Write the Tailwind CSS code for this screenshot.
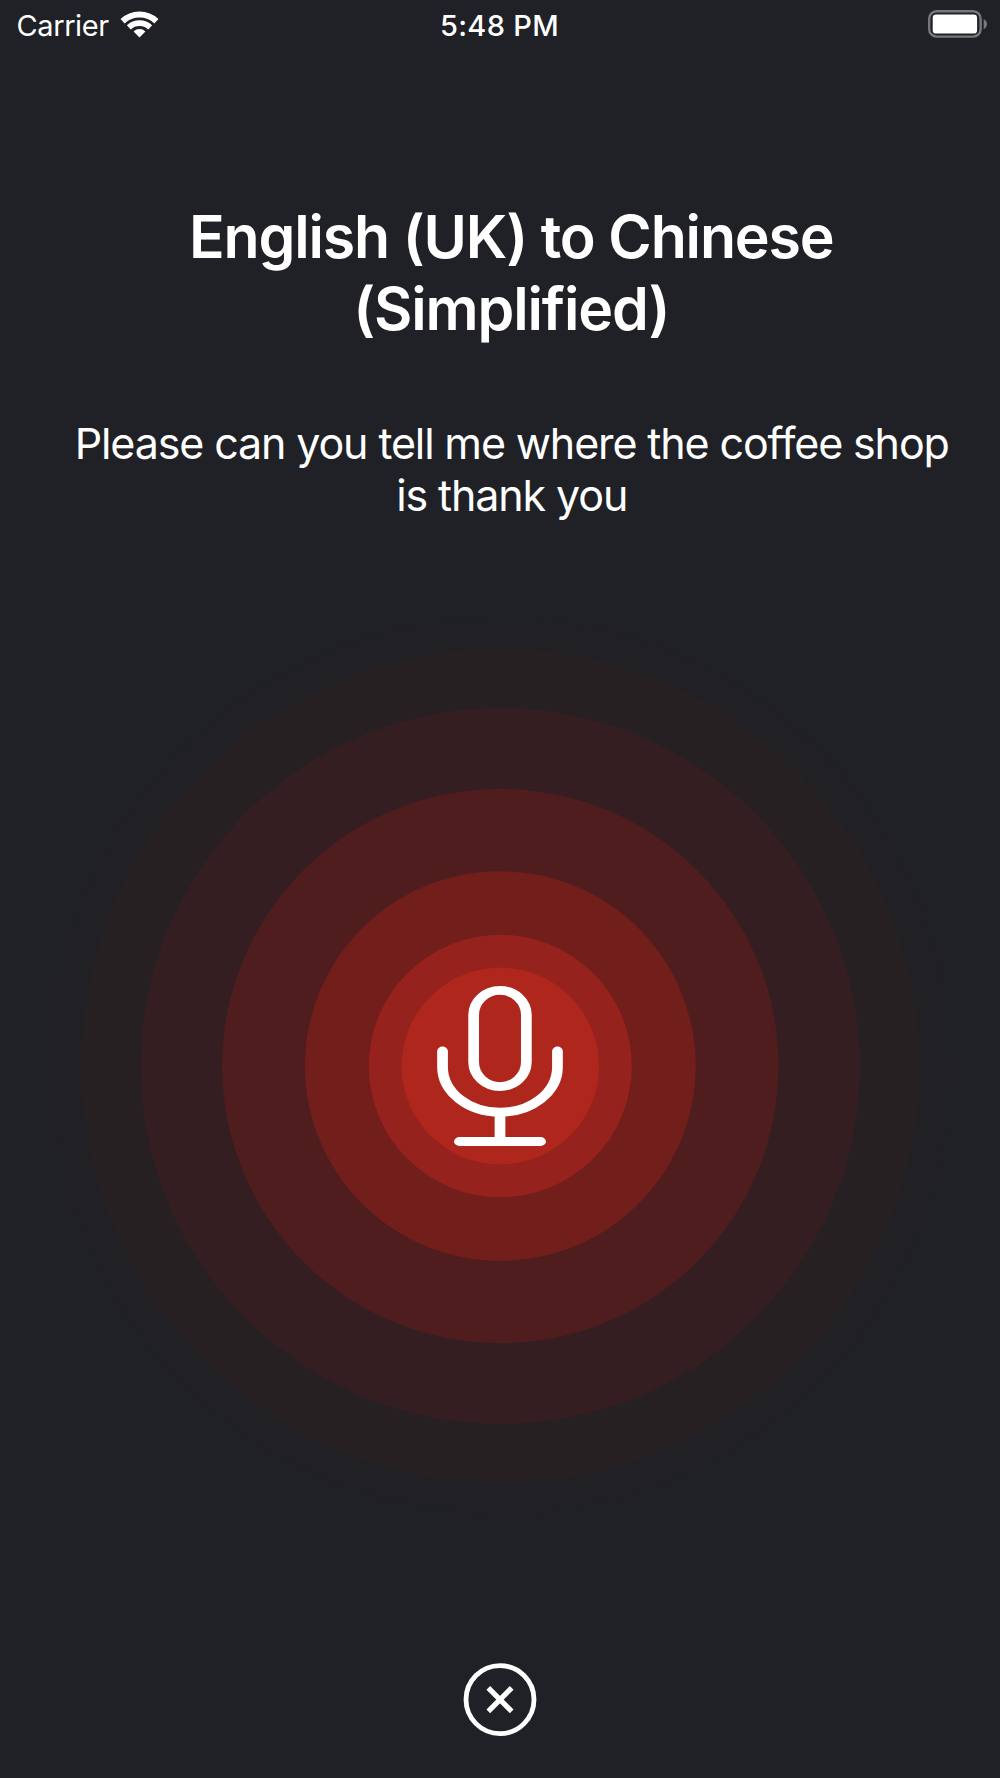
<!DOCTYPE html>
<html lang="en">
<head>
    <meta charset="UTF-8">
    <meta name="viewport" content="width=device-width, initial-scale=1.0">
    <title>Translate</title>
    <script src="https://cdn.jsdelivr.net/npm/@tailwindcss/browser@4"></script>
</head>
<body class="bg-[#202126] text-white font-['Inter',sans-serif]">
    <div class="flex flex-col w-[1000px] h-[1778px] overflow-hidden">
        <!-- status bar -->
        <header class="grid grid-cols-3 h-[51px] shrink-0 text-[29px] leading-[51px]">
            <div class="flex pl-[16.5px]">
                <span class="tracking-[-0.4px]">Carrier</span>
                <svg class="ml-[11px] mt-[9px] w-[40px] h-[30px]" viewBox="0 0 40 30" fill="none" stroke="#fff">
                    <path d="M2.6 12.3A24.6 24.6 0 0 1 36.4 12.3" stroke-width="6"/>
                    <path d="M8.8 18.4A15.6 15.6 0 0 1 30.2 18.4" stroke-width="5.6"/>
                    <path d="M19.5 28.4L13.6 22.4A8.6 8.6 0 0 1 25.4 22.4Z" fill="#fff" stroke="none"/>
                </svg>
            </div>
            <div class="pr-[1px] text-center font-medium tracking-[0.3px]">5:48 PM</div>
            <div class="flex justify-end pr-[12px]">
                <svg class="mt-[9px] w-[62px] h-[30px]" viewBox="0 0 62 30">
                    <rect x="3.2" y="2.2" width="51.4" height="25.4" rx="7.4" fill="none" stroke="#77787b" stroke-width="2.4"/>
                    <rect x="6.7" y="5.6" width="44.4" height="19" rx="3.4" fill="#fff"/>
                    <path d="M57.7 10Q61 11.8 61 15.1T57.7 20.3Z" fill="#77787b"/>
                </svg>
            </div>
        </header>

        <main class="flex flex-col items-center">
            <h1 class="mt-[150px] pl-[22.5px] text-center text-[59px] leading-[71.5px] font-semibold tracking-[-1.15px]">English (UK) to Chinese<br>(Simplified)</h1>
            <p class="mt-[74px] pl-[23.5px] text-center text-[43px] leading-[51.5px] tracking-[-1.13px] whitespace-nowrap">Please can you tell me where the coffee shop<br>is thank you</p>

            <!-- pulse rings and microphone -->
            <svg class="mt-[79px] w-[1000px] h-[940px] shrink-0" viewBox="0 600 1000 940">
                <ellipse cx="500.3" cy="1066" rx="450" ry="448" fill="#212125"/>
                <ellipse cx="500.3" cy="1066" rx="419" ry="417" fill="#272023"/>
                <ellipse cx="500.3" cy="1066" rx="359.5" ry="358" fill="#341e21"/>
                <ellipse cx="500.3" cy="1066" rx="278.2" ry="277.2" fill="#501d1f"/>
                <ellipse cx="500.3" cy="1066" rx="195.4" ry="194.7" fill="#721e1b"/>
                <ellipse cx="500.3" cy="1066" rx="131.5" ry="131.2" fill="#95221c"/>
                <ellipse cx="500.3" cy="1066" rx="98.7" ry="98.4" fill="#ae261c"/>
                <g transform="translate(500 0) scale(1.22 1)" fill="none" stroke="#fff" stroke-width="8.8" stroke-linecap="round">
                    <rect x="-21.6" y="990.4" width="43.2" height="96.2" rx="21.6" ry="24.5"/>
                    <path d="M-47.1 1051V1067C-47.1 1092 -26 1112.2 0 1112.2S47.1 1092 47.1 1067V1051"/>
                    <path d="M0 1114V1140M-33.3 1141.5H33.3"/>
                </g>
            </svg>

            <button class="mt-[120px]" aria-label="Close">
                <svg class="w-20 h-20" viewBox="0 0 80 80" fill="none" stroke="#fff">
                    <circle cx="40" cy="39.6" r="34" stroke-width="4.8"/>
                    <path d="M28.3 27.9L51.7 51.3M51.7 27.9L28.3 51.3" stroke-width="5.2"/>
                </svg>
            </button>
        </main>
    </div>
</body>
</html>
